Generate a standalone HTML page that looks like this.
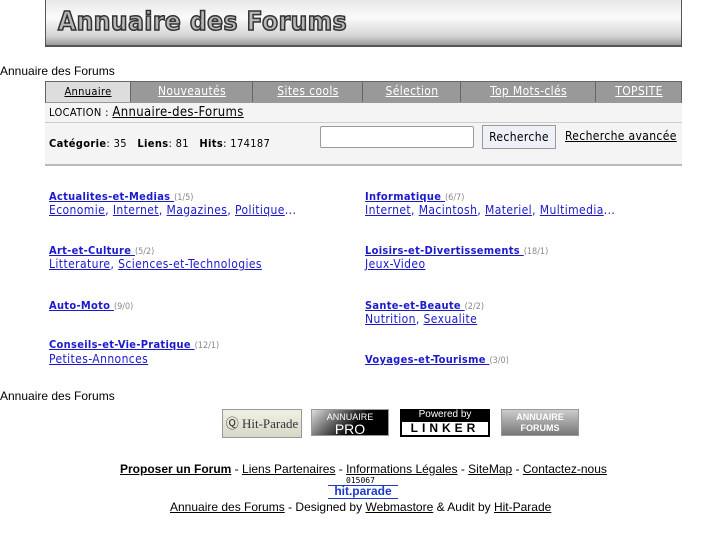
<!DOCTYPE html>
<html><head><meta charset="utf-8"><style>
*{margin:0;padding:0}
body{width:727px;height:545px;background:#fff;position:relative;font-family:"Liberation Sans",sans-serif;font-size:12px;color:#000;overflow:hidden}
.a{position:absolute;white-space:nowrap}
.dv{font-family:"DejaVu Sans Condensed","DejaVu Sans",sans-serif;font-stretch:condensed;letter-spacing:0.35px}
a{color:#000;text-decoration:underline}
.cat{font-family:"DejaVu Sans Condensed","DejaVu Sans",sans-serif;font-stretch:condensed;font-size:11px;font-weight:bold;color:#1a1acc;letter-spacing:0.3px}
.cnt{font-family:"DejaVu Sans Condensed","DejaVu Sans",sans-serif;font-stretch:condensed;font-size:9px;color:#888;font-weight:normal}
.sub{font-family:"DejaVu Sans Condensed","DejaVu Sans",sans-serif;font-stretch:condensed;font-size:12px;color:#1a1acc;letter-spacing:0.4px}
.sub a{color:#1a1acc}
.tab{position:absolute;top:82px;height:20px;line-height:19px;text-align:center;font-family:"DejaVu Sans Condensed","DejaVu Sans",sans-serif;font-stretch:condensed;font-size:12px;color:#fff;text-decoration:underline;border-left:1px solid #666;letter-spacing:0.35px}
</style></head><body>
<div class="a" style="left:45px;top:0;width:635px;height:45px;border:1px solid #555;border-top:none;border-bottom:2px solid #555;background:linear-gradient(#e8e8e8,#fafafa 40%,#d4d4d4 80%,#9a9a9a)"></div>
<div class="a dv" style="left:58px;top:7px;font-weight:bold;font-size:26px;color:#b8b8b8;-webkit-text-stroke:1.5px #333;letter-spacing:0.5px">Annuaire des Forums</div>
<div class="a" style="left:0;top:64px;font-size:12px">Annuaire des Forums</div>
<div class="a" style="left:45px;top:81px;width:635px;height:21px;background:#999;border:1px solid #666"></div>
<div class="tab" style="left:46px;width:84px;background:#ddd;color:#000;border:none;font-size:11px">Annuaire</div>
<div class="tab" style="left:130px;width:122px">Nouveautés</div>
<div class="tab" style="left:252px;width:110px">Sites cools</div>
<div class="tab" style="left:362px;width:98px">Sélection</div>
<div class="tab" style="left:460px;width:135px">Top Mots-clés</div>
<div class="tab" style="left:595px;width:86px">TOPSITE</div>
<div class="a" style="left:45px;top:103px;width:637px;height:61px;background:#f4f4f4;border-bottom:2px solid #bbb"></div>
<div class="a" style="left:45px;top:122px;width:637px;height:1px;background:#ccc"></div>
<div class="a dv" style="left:49px;top:105px;font-size:11px">LOCATION : <a style="font-size:13px">Annuaire-des-Forums</a></div>
<div class="a dv" style="left:49px;top:137px;font-size:11px"><b>Catégorie</b>: 35 &nbsp; <b>Liens</b>: 81 &nbsp; <b>Hits</b>: 174187</div>
<div class="a" style="left:320px;top:126px;width:152px;height:20px;background:#fff;border:1px solid #999;border-radius:2px"></div>
<div class="a dv" style="left:482px;top:125px;width:72px;height:22px;background:#eef0f8;border:1px solid #999;line-height:22px;text-align:center;font-size:12px">Recherche</div>
<div class="a dv" style="left:565px;top:129px;font-size:12px;text-decoration:underline">Recherche avancée</div>

<div class="a" style="left:49px;top:189px"><u class="cat">Actualites-et-Medias </u><span class="cnt">(1/5)</span></div>
<div class="a sub" style="left:49px;top:203px"><a>Economie</a>, <a>Internet</a>, <a>Magazines</a>, <a>Politique</a>...</div>
<div class="a" style="left:49px;top:243px"><u class="cat">Art-et-Culture </u><span class="cnt">(5/2)</span></div>
<div class="a sub" style="left:49px;top:257px"><a>Litterature</a>, <a>Sciences-et-Technologies </a></div>
<div class="a" style="left:49px;top:298px"><u class="cat">Auto-Moto </u><span class="cnt">(9/0)</span></div>
<div class="a" style="left:49px;top:337px"><u class="cat">Conseils-et-Vie-Pratique </u><span class="cnt">(12/1)</span></div>
<div class="a sub" style="left:49px;top:352px"><a>Petites-Annonces</a></div>

<div class="a" style="left:365px;top:189px"><u class="cat">Informatique </u><span class="cnt">(6/7)</span></div>
<div class="a sub" style="left:365px;top:203px"><a>Internet</a>, <a>Macintosh</a>, <a>Materiel</a>, <a>Multimedia</a>...</div>
<div class="a" style="left:365px;top:243px"><u class="cat">Loisirs-et-Divertissements </u><span class="cnt">(18/1)</span></div>
<div class="a sub" style="left:365px;top:257px"><a>Jeux-Video </a></div>
<div class="a" style="left:365px;top:298px"><u class="cat">Sante-et-Beaute </u><span class="cnt">(2/2)</span></div>
<div class="a sub" style="left:365px;top:312px"><a>Nutrition</a>, <a>Sexualite</a></div>
<div class="a" style="left:365px;top:352px"><u class="cat">Voyages-et-Tourisme </u><span class="cnt">(3/0)</span></div>

<div class="a" style="left:0;top:389px">Annuaire des Forums</div>
<div class="a" style="left:222px;top:409px;width:78px;height:27px;background:linear-gradient(#f0f0e4,#d8d8c8);border:1px solid #999;font-family:'Liberation Serif',serif;font-size:13px;line-height:27px;text-align:center;color:#333">Ⓠ Hit-Parade</div>
<div class="a" style="left:311px;top:409px;width:78px;height:27px;background:linear-gradient(135deg,#ddd,#000 60%);border:1px solid #999;color:#fff;font-size:9px;line-height:10px;text-align:center;padding-top:2px;box-sizing:border-box">ANNUAIRE<br><span style="font-size:14px;line-height:15px">PRO</span></div>
<div class="a" style="left:400px;top:409px;width:90px;height:28px;background:#000;color:#fff;font-size:10px;text-align:center;line-height:12px"><div>Powered by</div><div style="background:#fff;color:#000;margin:1px 2px;font-size:12px;letter-spacing:4px;font-weight:bold;line-height:13px">LINKER</div></div>
<div class="a" style="left:501px;top:409px;width:78px;height:27px;background:linear-gradient(#ccc,#777);border:1px solid #999;color:#fff;font-size:9px;line-height:11px;text-align:center;font-weight:bold;padding-top:2px;box-sizing:border-box">ANNUAIRE<br>FORUMS</div>

<div class="a" style="left:120px;top:462px"><a><b>Proposer un Forum</b></a> - <a>Liens Partenaires</a> - <a>Informations Légales</a> - <a>SiteMap</a> - <a>Contactez-nous</a></div>
<div class="a" style="left:346px;top:476px;font-family:'DejaVu Sans Mono',monospace;font-size:8px">015067</div>
<div class="a" style="left:328px;top:485px;width:70px;height:12px;color:#1a3acc;font-weight:bold;font-size:12px;line-height:11px;text-align:center;border-top:1px solid #1a3acc;border-bottom:1px solid #1a3acc">hit.parade</div>
<div class="a" style="left:170px;top:500px"><a>Annuaire des Forums</a> - Designed by <a>Webmastore</a> &amp; Audit by <a>Hit-Parade</a></div>
</body></html>
